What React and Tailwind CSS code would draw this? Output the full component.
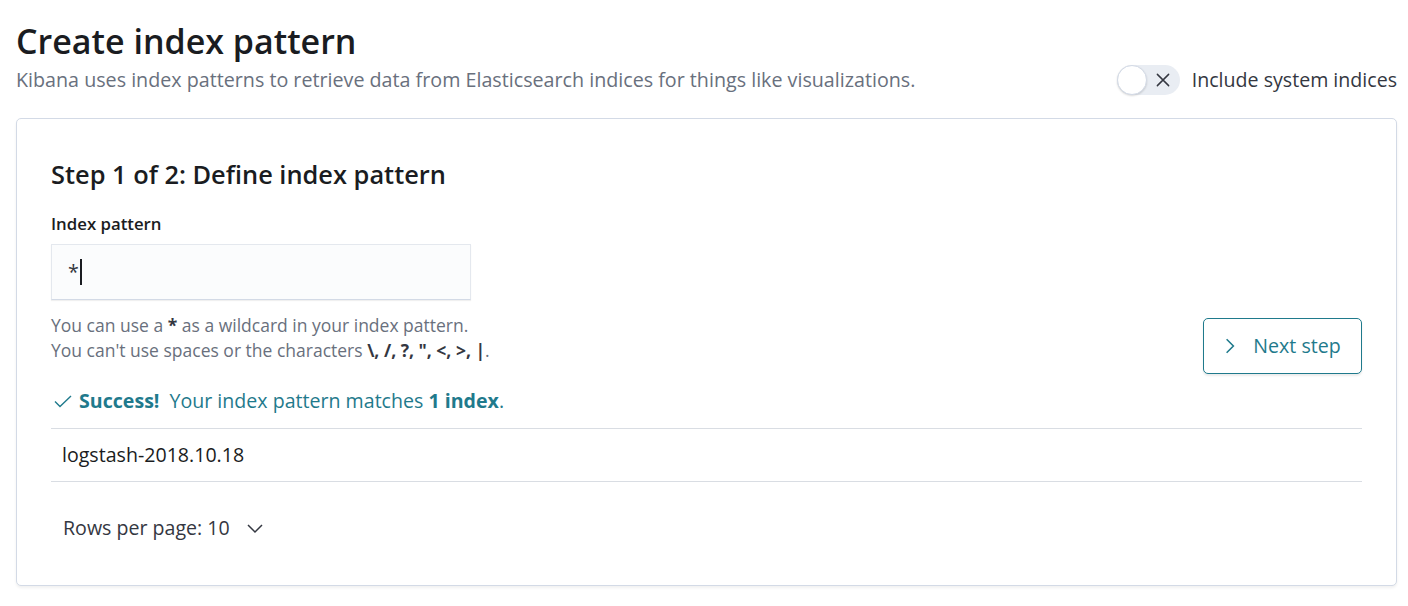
import React from "react";

const teal = "text-[#1f7a8c]";

export default function App() {
  return (
    <div className="min-h-screen bg-white pl-4 pr-[11px] pt-[18px] font-['Open_Sans',sans-serif] text-[#343741]">
      <div className="flex items-end justify-between">
        <div>
          <h1 className="text-[34px] font-semibold leading-[46px] text-[#1a1c21]">Create index pattern</h1>
          <p className="mt-[3px] text-[19.7px] leading-[26px] text-[#69707d]">
            Kibana uses index patterns to retrieve data from Elasticsearch indices for things like visualizations.
          </p>
        </div>
        <div className="mb-[-2px] flex items-center gap-3">
          <div className="relative flex h-[30px] w-[63px] items-center justify-end rounded-full bg-[#e9edf3] pr-[8px]">
            <div className="absolute left-0 top-0 h-[30px] w-[30px] rounded-full border border-[#d3dae6] bg-white shadow-[0_1px_2px_rgba(0,0,0,0.15)]" />
            <svg width="18" height="18" viewBox="0 0 16 16" fill="none" stroke="#343741" strokeWidth="1.3" strokeLinecap="round">
              <path d="M3 3l10 10M13 3L3 13" />
            </svg>
          </div>
          <span className="text-[19.6px] leading-[26px] text-[#343741]">Include system indices</span>
        </div>
      </div>

      <div className="mt-[25px] rounded-[5px] border border-[#d3dae6] bg-white px-[34px] pb-[44px] pt-[38px] shadow-[0_2px_3px_rgba(0,0,0,0.06)]">
        <h2 className="text-[25.4px] font-semibold leading-[34px] text-[#1a1c21]">Step 1 of 2: Define index pattern</h2>

        <div className="mt-[22px] flex items-start justify-between">
          <div>
            <label className="block text-[16.8px] font-semibold leading-[22px] text-[#1a1c21]">Index pattern</label>
            <div className="mt-[9px] flex h-[56px] w-[420px] items-center border border-[#e4e8ee] border-b-[#d3dae6] bg-[#fbfcfd] px-[16px] text-[19.6px] shadow-[0_1px_1px_rgba(0,0,0,0.06)]">
              <span>*</span>
              <span className="ml-[1px] h-[26px] w-[2px] bg-[#1a1c21]" />
            </div>
            <div className="mt-[13px] text-[17.5px] leading-[25px] text-[#69707d]">
              <p>
                You can use a <b className="text-[#343741]">*</b> as a wildcard in your index pattern.
              </p>
              <p>
                You can't use spaces or the characters <b className="text-[#343741]">\, /, ?, ", &lt;, &gt;, |</b>.
              </p>
            </div>
          </div>
          <button className={`mt-[105px] flex h-[56px] w-[159px] items-center justify-center gap-[17px] rounded-[5px] border border-[#1f7a8c] bg-white text-[19.6px] ${teal} shadow-[0_2px_2px_rgba(0,0,0,0.08)]`}>
            <svg width="12" height="18" viewBox="0 0 10 16" fill="none" stroke="currentColor" strokeWidth="1.4">
              <path d="M2 2l6 6-6 6" />
            </svg>
            Next step
          </button>
        </div>

        <div className={`mt-[14px] flex items-center text-[19.6px] leading-[26px] ${teal}`}>
          <svg width="20" height="16" viewBox="0 0 20 16" fill="none" stroke="currentColor" strokeWidth="1.4" className="ml-[2px] mr-[6px]">
            <path d="M2 8.5l5 5L18 3" />
          </svg>
          <b className="font-bold">Success!</b>
          <span className="ml-[10px]">
            Your index pattern matches <b className="font-bold">1 index</b>.
          </span>
        </div>

        <div className="mt-[14px] border-t border-b border-[#d9dde3] px-[11px] py-[11px] text-[19.6px] leading-[30px] text-[#1a1c21]">
          logstash-2018.10.18
        </div>

        <div className="mt-[33px] flex items-center gap-[16px] px-[12px] text-[19.6px] leading-[26px] text-[#343741]">
          <span>Rows per page: 10</span>
          <svg width="18" height="12" viewBox="0 0 18 12" fill="none" stroke="currentColor" strokeWidth="1.5">
            <path d="M2 3l7 7 7-7" />
          </svg>
        </div>
      </div>
    </div>
  );
}
